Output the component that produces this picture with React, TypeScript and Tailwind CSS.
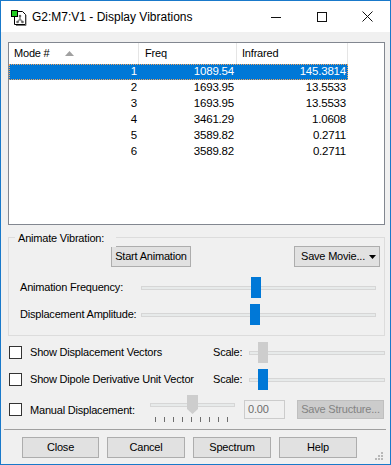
const rows = [
  { mode: 1, freq: '1089.54', ir: '145.3814' },
  { mode: 2, freq: '1693.95', ir: '13.5533' },
  { mode: 3, freq: '1693.95', ir: '13.5533' },
  { mode: 4, freq: '3461.29', ir: '1.0608' },
  { mode: 5, freq: '3589.82', ir: '0.2711' },
  { mode: 6, freq: '3589.82', ir: '0.2711' },
];

const Trackbar = ({ className, thumb, color }: { className: string; thumb: string; color: string }) => (
  <div className={`relative flex h-[21px] items-center ${className}`}>
    <div className="h-[4px] w-full border border-[#d6d6d6] bg-[#e7eaea]" />
    <div className={`absolute top-0 h-[21px] w-[10px] ${thumb} ${color}`} />
  </div>
);

const Checkbox = () => <div className="h-[13px] w-[13px] shrink-0 border border-[#333] bg-white" />;

const Button = ({ label, className }: { label: string; className: string }) => (
  <div className={`flex h-[21px] items-center justify-center border border-[#adadad] bg-[#e1e1e1] ${className}`}>{label}</div>
);

const AppIcon = () => (
  <svg width="16" height="16" viewBox="0 0 16 16" className="shrink-0">
    <path d="M3.5 1.5h8l3 3v10h-11z" fill="#fff" stroke="#000" />
    <path d="M5 15.5h10V5" fill="none" stroke="#777" />
    <line x1="9" y1="6" x2="9" y2="9" stroke="#888" strokeWidth="1.5" />
    <line x1="9" y1="9" x2="6.5" y2="12" stroke="#888" strokeWidth="1.5" />
    <line x1="9" y1="9" x2="11.5" y2="12" stroke="#888" strokeWidth="1.5" />
    <circle cx="9" cy="6" r="1.3" fill="#666" />
    <circle cx="6.5" cy="12" r="1.3" fill="#666" />
    <circle cx="11.5" cy="12" r="1.3" fill="#666" />
    <rect x="0.5" y="0.5" width="6" height="6" fill="#22cc22" stroke="#000" />
  </svg>
);

export default function App() {
  return (
    <div className="relative flex h-[465px] w-[391px] flex-col border border-[#1979ca] bg-[#f0f0f0] text-[11px] tracking-[-0.2px] text-black font-['Liberation_Sans',Arial,sans-serif]">
      {/* title bar */}
      <div className="flex h-[31px] shrink-0 items-center bg-white">
        <div className="ml-[10px] mt-[2px]"><AppIcon /></div>
        <span className="ml-[5px] text-[12px] tracking-normal">G2:M7:V1 - Display Vibrations</span>
        <div className="ml-auto flex h-full">
          <div className="flex w-[46px] items-center justify-center">
            <svg width="10" height="10" viewBox="0 0 10 10"><line x1="0" y1="5.5" x2="10" y2="5.5" stroke="#111" /></svg>
          </div>
          <div className="flex w-[46px] items-center justify-center">
            <svg width="10" height="10" viewBox="0 0 10 10"><rect x="0.5" y="0.5" width="9" height="9" fill="none" stroke="#111" /></svg>
          </div>
          <div className="flex w-[45px] items-center justify-center">
            <svg width="11" height="11" viewBox="0 0 11 11"><path d="M0.5 0.5l10 10M10.5 0.5l-10 10" stroke="#111" /></svg>
          </div>
        </div>
      </div>

      {/* list view */}
      <div className="ml-[7px] mt-[10px] h-[183px] w-[377px] border border-[#828790] bg-white">
        <div className="flex h-[21px] items-center">
          <div className="flex h-full w-[130px] items-center border-r border-[#e5e5e5] pl-[5px]">
            Mode #
            <svg width="9" height="5" viewBox="0 0 9 5" className="ml-[15px]"><path d="M0 5L4.5 0 9 5z" fill="#a0a0a0" /></svg>
          </div>
          <div className="flex h-full w-[98px] items-center border-r border-[#e5e5e5] pl-[6px]">Freq</div>
          <div className="flex h-full w-[111px] items-center border-r border-[#e5e5e5] pl-[5px]">Infrared</div>
        </div>
        {rows.map((r, i) => (
          <div
            key={r.mode}
            className={`flex h-[16px] w-[339px] items-center text-[11.5px] ${i === 0 ? 'bg-[#0078d7] text-white outline-1 -outline-offset-1 outline-dotted outline-[#f5a35b]' : ''}`}
          >
            <div className="w-[130px] pr-[2px] text-right">{r.mode}</div>
            <div className="w-[98px] pr-[3px] text-right">{r.freq}</div>
            <div className="w-[111px] pr-[2px] text-right">{r.ir}</div>
          </div>
        ))}
      </div>

      {/* animate group */}
      <div className="relative ml-[7px] mt-[12px] h-[99px] w-[377px] border border-[#dcdcdc]">
        <span className="absolute -top-[8px] left-[6px] bg-[#f0f0f0] pl-[3px] pr-[12px]">Animate Vibration:</span>
        <div className="mt-[8px] flex">
          <Button label="Start Animation" className="ml-[102px] w-[80px]" />
          <div className="ml-auto mr-[4px] flex h-[21px] w-[86px] items-center border border-[#adadad] bg-[#e1e1e1] pl-[6px]">
            Save Movie...
            <svg width="7" height="4" viewBox="0 0 7 4" className="ml-[4px]"><path d="M0 0h7L3.5 4z" fill="#000" /></svg>
          </div>
        </div>
        <div className="mt-[10px] flex items-center">
          <span className="ml-[11px] w-[121px]">Animation Frequency:</span>
          <Trackbar className="w-[235px]" thumb="left-[110px]" color="bg-[#0078d7]" />
        </div>
        <div className="mt-[6px] flex items-center">
          <span className="ml-[11px] w-[121px]">Displacement Amplitude:</span>
          <Trackbar className="w-[235px]" thumb="left-[109px]" color="bg-[#0078d7]" />
        </div>
      </div>

      {/* checkbox rows */}
      <div className="mt-[6px] flex items-center">
        <div className="ml-[8px]"><Checkbox /></div>
        <span className="ml-[8px] w-[183px]">Show Displacement Vectors</span>
        <span className="w-[36px]">Scale:</span>
        <Trackbar className="w-[136px]" thumb="left-[9px]" color="bg-[#cdcdcd]" />
      </div>
      <div className="mt-[6px] flex items-center">
        <div className="ml-[8px]"><Checkbox /></div>
        <span className="ml-[8px] w-[183px]">Show Dipole Derivative Unit Vector</span>
        <span className="w-[36px]">Scale:</span>
        <Trackbar className="w-[136px]" thumb="left-[9px]" color="bg-[#0078d7]" />
      </div>
      <div className="mt-[5px] flex h-[28px] items-start">
        <div className="ml-[8px] mt-[8px]"><Checkbox /></div>
        <span className="ml-[8px] mt-[7px] w-[120px]">Manual Displacement:</span>
        <div className="relative h-[28px] w-[85px]">
          <div className="mt-[8px] h-[4px] w-full border border-[#d6d6d6] bg-[#e7eaea]" />
          <svg width="11" height="19" viewBox="0 0 11 19" className="absolute left-[37px] top-0">
            <path d="M0 0h11v14l-5.5 5L0 14z" fill="#cdcdcd" />
          </svg>
          <div className="mt-[10px] flex gap-[8px] pl-[5px]">
            {[0, 1, 2, 3, 4, 5, 6, 7, 8].map((t) => (
              <div key={t} className="h-[5px] w-[1px] bg-[#6d6d6d]" />
            ))}
          </div>
        </div>
        <div className="ml-[9px] mt-[5px] flex h-[19px] w-[41px] items-center border border-[#cccccc] bg-[#f0f0f0] pl-[3px] text-[#6d6d6d]">0.00</div>
        <div className="ml-[12px] mt-[5px] flex h-[19px] w-[87px] items-center justify-center border border-[#bfbfbf] bg-[#cccccc] text-[#838383]">Save Structure...</div>
      </div>

      {/* separator */}
      <div className="ml-[3px] mt-[6px] h-[2px] w-[382px] border-t border-[#a0a0a0] border-b-white" />

      {/* bottom buttons */}
      <div className="mt-[6px] flex gap-[8px] pl-[21px]">
        <Button label="Close" className="w-[77px]" />
        <Button label="Cancel" className="w-[78px]" />
        <Button label="Spectrum" className="w-[78px]" />
        <Button label="Help" className="w-[78px]" />
      </div>

      <svg width="9" height="9" viewBox="0 0 9 9" className="absolute bottom-[3px] right-[6px]">
        <rect x="6" y="0" width="2" height="2" fill="#b8b8b8" />
        <rect x="3" y="3" width="2" height="2" fill="#b8b8b8" />
        <rect x="6" y="3" width="2" height="2" fill="#b8b8b8" />
        <rect x="0" y="6" width="2" height="2" fill="#b8b8b8" />
        <rect x="3" y="6" width="2" height="2" fill="#b8b8b8" />
        <rect x="6" y="6" width="2" height="2" fill="#b8b8b8" />
      </svg>
    </div>
  );
}
